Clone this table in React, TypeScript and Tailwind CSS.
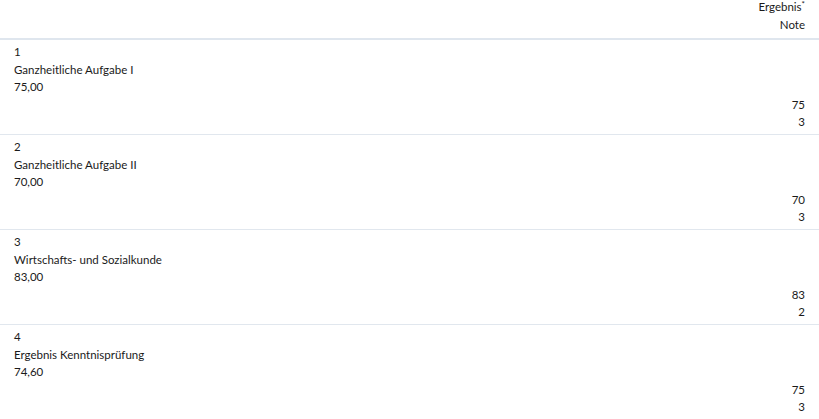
import React from "react";

const rows = [
  { nr: "1", title: "Ganzheitliche Aufgabe I", punkte: "75,00", ergebnis: "75", note: "3" },
  { nr: "2", title: "Ganzheitliche Aufgabe II", punkte: "70,00", ergebnis: "70", note: "3" },
  { nr: "3", title: "Wirtschafts- und Sozialkunde", punkte: "83,00", ergebnis: "83", note: "2" },
  { nr: "4", title: "Ergebnis Kenntnisprüfung", punkte: "74,60", ergebnis: "75", note: "3" },
];

export default function App() {
  return (
    <div className="w-[819px] h-[419px] bg-white text-[11.5px] leading-[17.5px] text-[#1a1a1a] font-['Lato',sans-serif] overflow-hidden">
      <div className="border-b-2 border-[#dfe6ee] px-[14px] pt-0 pb-[3px] text-right">
        <div className="-mt-[2px] pb-[2px]">
          <div>
            Ergebnis<span className="relative -top-[4px] text-[8px] leading-none">*</span>
          </div>
          <div>Note</div>
        </div>
      </div>
      {rows.map((r) => (
        <div key={r.nr} className="border-b border-[#e1e7ee] px-[14px] pt-[3px] pb-[3.5px]">
          <div>{r.nr}</div>
          <div>{r.title}</div>
          <div>{r.punkte}</div>
          <div className="text-right">{r.ergebnis}</div>
          <div className="text-right">{r.note}</div>
        </div>
      ))}
    </div>
  );
}
